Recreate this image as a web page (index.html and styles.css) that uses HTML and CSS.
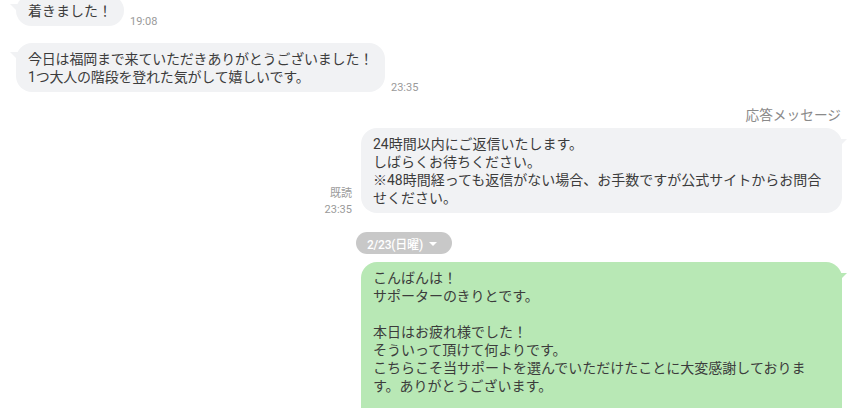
FILE: index.html
```html
<!DOCTYPE html>
<html lang="ja">
<head>
<meta charset="utf-8">
<title>Chat</title>
<link rel="stylesheet" href="styles.css">
</head>
<body>
<div class="chat">
  <div class="row in first">
    <div class="bubble grey tail-left">着きました！</div>
    <div class="meta">19:08</div>
  </div>
  <div class="row in gap-17">
    <div class="bubble grey tail-left tight">今日は福岡まで来ていただきありがとうございました！<br>1つ大人の階段を登れた気がして嬉しいです。</div>
    <div class="meta">23:35</div>
  </div>
  <div class="label">応答メッセージ</div>
  <div class="row out">
    <div class="meta right"><span>既読</span><span>23:35</span></div>
    <div class="bubble grey wide tail-right">24時間以内にご返信いたします。<br>しばらくお待ちください。<br>※48時間経っても返信がない場合、お手数ですが公式サイトからお問合<br>せください。</div>
  </div>
  <div class="date-row">
    <div class="date-col">
      <div class="pill">2/23(日曜)<span class="caret"></span></div>
    </div>
  </div>
  <div class="row out">
    <div class="bubble green wide tail-right">こんばんは！<br>サポーターのきりとです。<br><br>本日はお疲れ様でした！<br>そういって頂けて何よりです。<br>こちらこそ当サポートを選んでいただけたことに大変感謝しておりま<br>す。ありがとうございます。<br><br><br></div>
  </div>
</div>
</body>
</html>
```

FILE: styles.css
```css
html, body {
  margin: 0;
  padding: 0;
  background: #ffffff;
  overflow: hidden;
  height: 408px;
}

.chat {
  display: flex;
  flex-direction: column;
  font-family: Roboto, "Noto Sans CJK JP", sans-serif;
  font-size: 14px;
  color: #3c3c3c;
}

.row {
  display: flex;
  align-items: flex-end;
}

.row.in {
  padding-left: 16px;
  gap: 6px;
}

.row.out {
  justify-content: flex-end;
  padding-right: 11px;
  gap: 9px;
}

.row.first {
  margin-top: -5px;
}

.gap-17 {
  margin-top: 17px;
}

.bubble {
  position: relative;
  line-height: 18px;
  padding: 7px 12px 6px;
  border-radius: 16px;
  white-space: nowrap;
}

.bubble.tight {
  letter-spacing: -0.2px;
}

.bubble.grey {
  background: #f1f2f4;
}

.bubble.green {
  background: #b8e8b5;
}

.bubble.wide {
  width: 481px;
  box-sizing: border-box;
}

.tail-left::before {
  content: "";
  position: absolute;
  left: -6px;
  top: 9px;
  width: 8px;
  height: 8px;
  background: inherit;
  clip-path: polygon(0 0, 100% 0, 100% 100%);
}

.tail-right::before {
  content: "";
  position: absolute;
  right: -5px;
  top: 11px;
  width: 7px;
  height: 7px;
  background: inherit;
  clip-path: polygon(0 0, 100% 0, 0 100%);
}

.meta {
  font-size: 11px;
  line-height: 14px;
  color: #9a9a9a;
  margin-bottom: -3px;
}

.meta.right {
  display: flex;
  flex-direction: column;
  align-items: flex-end;
  line-height: 16px;
  margin-bottom: -5px;
}

.label {
  align-self: flex-end;
  margin-top: 15px;
  margin-bottom: 5px;
  padding-right: 12px;
  font-size: 13.7px;
  line-height: 16px;
  color: #8a8a8a;
}

.date-row {
  display: flex;
  justify-content: flex-end;
  padding-right: 11px;
  margin-top: 19px;
  margin-bottom: 8px;
}

.date-col {
  width: 486px;
}

.pill {
  display: inline-flex;
  align-items: center;
  gap: 6px;
  height: 22px;
  width: 96px;
  box-sizing: border-box;
  padding-left: 11px;
  border-radius: 11px;
  background: #c8c8c8;
  color: #ffffff;
  font-size: 12px;
  font-weight: 500;
  letter-spacing: -0.2px;
}

.caret {
  width: 0;
  height: 0;
  border-left: 4px solid transparent;
  border-right: 4px solid transparent;
  border-top: 4px solid #ffffff;
  margin-top: 1px;
}
```
